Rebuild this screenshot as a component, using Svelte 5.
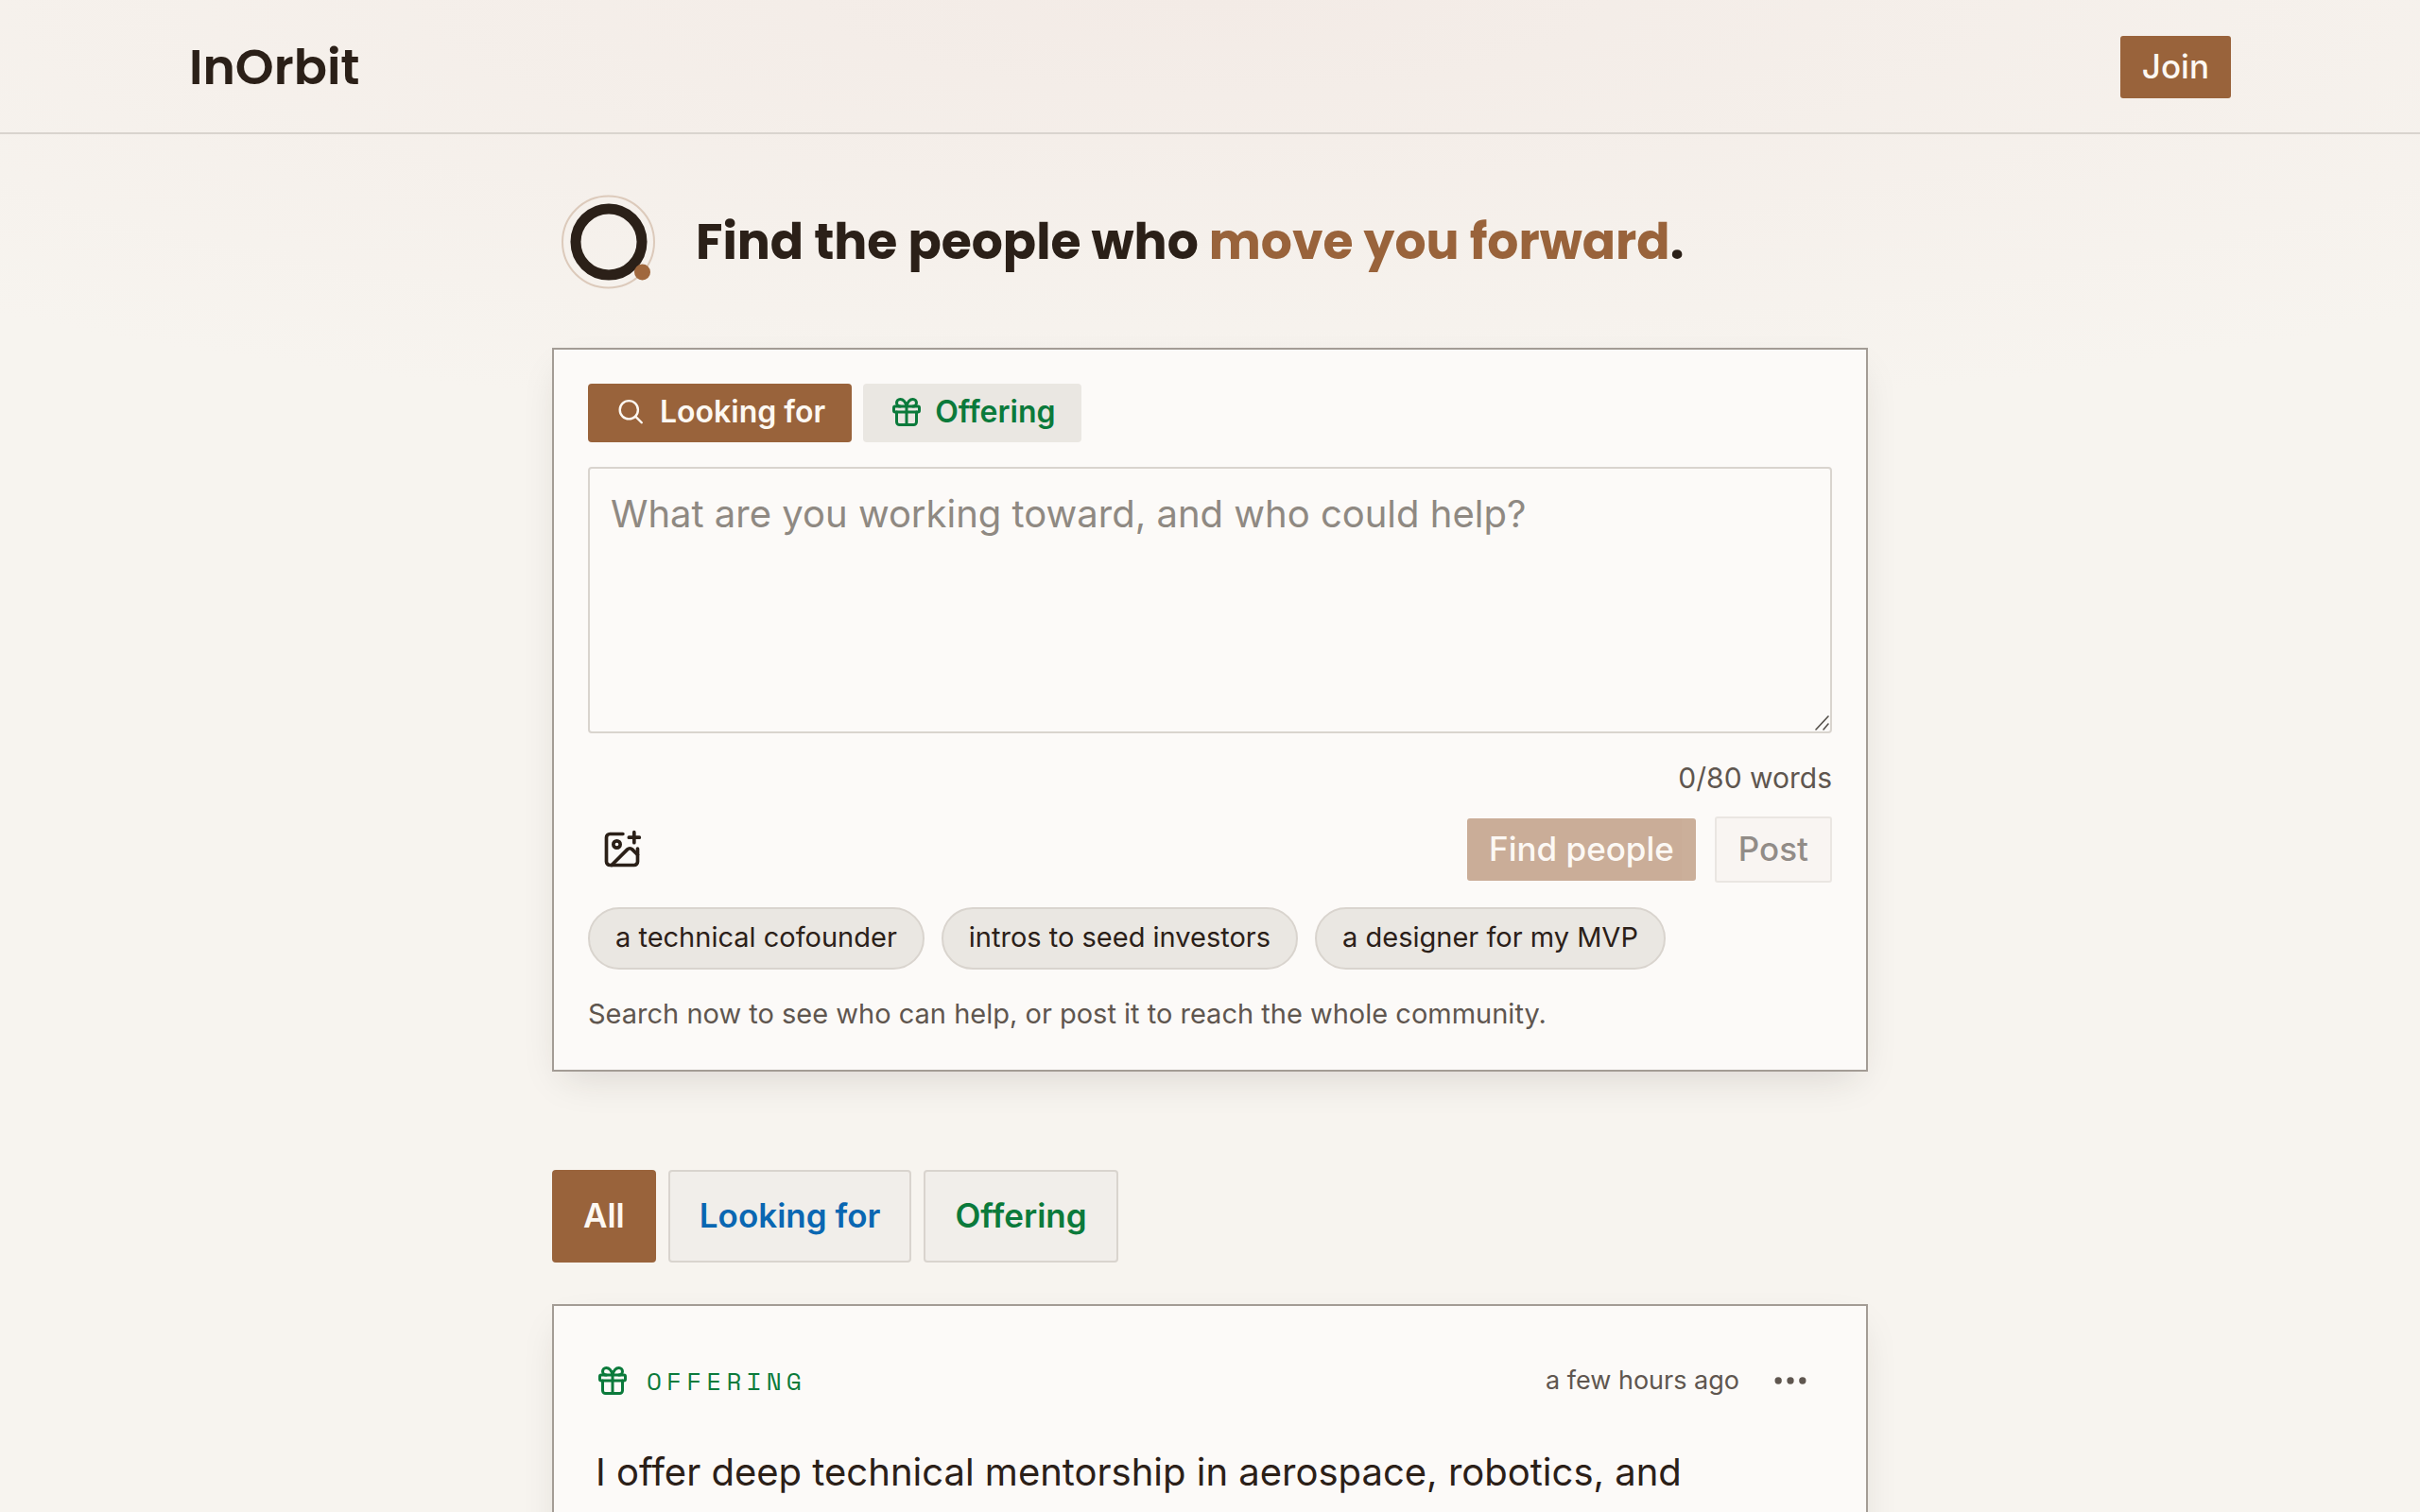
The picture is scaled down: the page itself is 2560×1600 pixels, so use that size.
<script lang="ts">
	type Kind = 'looking' | 'offering';

	let kind = $state<Kind>('looking');
	let filter = $state<'all' | Kind>('all');
	let draft = $state('');

	const maxWords = 80;
	const suggestions = ['a technical cofounder', 'intros to seed investors', 'a designer for my MVP'];

	const words = $derived(draft.trim() ? draft.trim().split(/\s+/).length : 0);
	const empty = $derived(words === 0);
</script>

{#snippet giftIcon()}
	<svg class="icon" viewBox="0 0 24 24" aria-hidden="true">
		<rect x="3" y="8" width="18" height="4" rx="1" />
		<path d="M12 8v13M19 12v7a2 2 0 0 1-2 2H7a2 2 0 0 1-2-2v-7" />
		<path d="M7.500 8a2.500 2.500 0 0 1 0-5A4.800 8 0 0 1 12 8a4.800 8 0 0 1 4.500-5 2.500 2.500 0 0 1 0 5" />
	</svg>
{/snippet}

<div class="page">
	<header class="site-header">
		<div class="header-inner">
			<a class="brand" href="/">InOrbit</a>
			<button class="btn primary" type="button">Join</button>
		</div>
	</header>

	<main>
		<div class="hero">
			<svg class="orbit" viewBox="0 0 100 100" aria-hidden="true">
				<circle class="orbit-path" cx="49.500" cy="50" r="48.500" />
				<circle class="orbit-ring" cx="50" cy="50" r="35" />
				<circle class="orbit-moon" cx="85.500" cy="82" r="8.500" />
			</svg>
			<h1>Find the people who <em>move you forward</em>.</h1>
		</div>

		<form class="card composer" onsubmit={(e) => e.preventDefault()}>
			<div class="kinds">
				<button type="button" class="kind" class:active={kind === 'looking'} onclick={() => (kind = 'looking')}>
					<svg class="icon thin" viewBox="0 0 24 24" aria-hidden="true">
						<circle cx="10.200" cy="10.500" r="6.400" />
						<path d="m19.200 19.500-4.400-4.400" />
					</svg>
					Looking for
				</button>
				<button type="button" class="kind offering" class:active={kind === 'offering'} onclick={() => (kind = 'offering')}>
					{@render giftIcon()}
					Offering
				</button>
			</div>

			<div class="draft">
				<textarea bind:value={draft} aria-label="Your post" placeholder="What are you working toward, and who could help?"></textarea>
				<svg class="grip" viewBox="0 0 18 18" aria-hidden="true">
					<path d="M3 16 16 2M11 16l5-6" />
				</svg>
			</div>
			<p class="count">{words}/{maxWords} words</p>

			<div class="actions">
				<button class="icon-btn" type="button" aria-label="Add image">
					<svg class="icon large" viewBox="0 0 24 24" aria-hidden="true">
						<path d="M16 5h6M19 2v6M21 11.500V19a2 2 0 0 1-2 2H5a2 2 0 0 1-2-2V5a2 2 0 0 1 2-2h7.500" />
						<path d="m21 15-3.086-3.086a2 2 0 0 0-2.828 0L6 21" />
						<circle cx="9" cy="9" r="2" />
					</svg>
				</button>
				<div class="submit">
					<button class="btn primary" type="submit" disabled={empty}>Find people</button>
					<button class="btn outline" type="button" disabled={empty}>Post</button>
				</div>
			</div>

			<div class="chips">
				{#each suggestions as suggestion}
					<button type="button" class="chip" onclick={() => (draft = suggestion)}>{suggestion}</button>
				{/each}
			</div>
			<p class="hint">Search now to see who can help, or post it to reach the whole community.</p>
		</form>

		<div class="filters">
			<button type="button" class="filter" class:active={filter === 'all'} onclick={() => (filter = 'all')}>All</button>
			<button type="button" class="filter looking" class:active={filter === 'looking'} onclick={() => (filter = 'looking')}>Looking for</button>
			<button type="button" class="filter offering" class:active={filter === 'offering'} onclick={() => (filter = 'offering')}>Offering</button>
		</div>

		<article class="card post">
			<div class="post-head">
				<span class="tag">{@render giftIcon()} Offering</span>
				<span class="meta">
					<time>a few hours ago</time>
					<button class="icon-btn muted" type="button" aria-label="More options">
						<svg class="icon large" viewBox="0 0 24 24" aria-hidden="true">
							<circle cx="5" cy="12" r="1" />
							<circle cx="12" cy="12" r="1" />
							<circle cx="19" cy="12" r="1" />
						</svg>
					</button>
				</span>
			</div>
			<p class="post-text">I offer deep technical mentorship in aerospace, robotics, and</p>
		</article>
	</main>
</div>

<style>
	:global(body) {
		background: #f7f4ef;
	}

	.page {
		--ink: #2b2018;
		--muted: #5f564f;
		--accent: #99633b;
		--line: #d9d4ce;
		--surface: #fcfaf8;
		--soft: #eae7e2;
		--green: #0b7a3b;
		--blue: #0a67b2;

		height: 100vh;
		overflow: hidden;
		color: var(--ink);
		background: radial-gradient(ellipse 75% 28% at 50% 0, #f3ebe6, #f7f4ef00) no-repeat;
		font-family: Inter, sans-serif;
		font-size: 30px;
		line-height: 44px;
	}

	button {
		margin: 0;
		color: inherit;
		font: inherit;
		cursor: pointer;
	}

	p {
		margin: 0;
	}

	.icon {
		flex: none;
		width: 36px;
		height: 36px;
		fill: none;
		stroke: currentColor;
		stroke-width: 2;
		stroke-linecap: round;
		stroke-linejoin: round;
	}

	.icon.thin {
		stroke-width: 1.6;
	}

	.icon.large {
		width: 44px;
		height: 44px;
	}

	.site-header {
		padding: 0 200px;
		border-bottom: 2px solid var(--line);
	}

	.header-inner {
		display: flex;
		align-items: center;
		justify-content: space-between;
		max-width: 2160px;
		padding: 38px 0 36px;
		margin: 0 auto;
	}

	.brand {
		color: var(--ink);
		font-family: Poppins, Inter, sans-serif;
		font-size: 52px;
		font-weight: 600;
		text-decoration: none;
	}

	.btn {
		padding: 10px 23px 12px;
		border: 0;
		border-radius: 3px;
		font-size: 35px;
		font-weight: 500;
	}

	.btn.primary {
		background: var(--accent);
		color: #fdf8f2;
	}

	.btn.outline {
		border: 2px solid var(--line);
		background: #f7f2ee;
	}

	.btn:disabled {
		opacity: 0.5;
	}

	main {
		max-width: 1392px;
		margin: 0 auto;
		padding-top: 64px;
	}

	.hero {
		display: flex;
		align-items: center;
		gap: 42px;
		margin-bottom: 62px;
		padding-left: 10px;
	}

	.orbit {
		flex: none;
		width: 100px;
		height: 100px;
		overflow: visible;
		fill: none;
	}

	.orbit-path {
		stroke: #dccabb;
		stroke-width: 2;
	}

	.orbit-ring {
		stroke: var(--ink);
		stroke-width: 11;
	}

	.orbit-moon {
		fill: #a0683e;
	}

	h1 {
		margin: 0;
		font-family: Poppins, Inter, sans-serif;
		font-size: 52px;
		font-weight: 700;
		line-height: 64px;
	}

	h1 em {
		color: var(--accent);
		font-style: normal;
	}

	.card {
		border: 2px solid #a39c95;
		background: var(--surface);
		box-shadow: 0 16px 40px -12px #2b201826;
	}

	.composer {
		padding: 36px;
	}

	.kinds {
		display: flex;
		gap: 12px;
		margin-bottom: 26px;
	}

	.kind {
		display: flex;
		align-items: center;
		gap: 12px;
		padding: 8px 28px 10px;
		border: 0;
		border-radius: 4px;
		background: var(--soft);
		font-size: 32px;
		font-weight: 600;
	}

	.kind.offering {
		color: var(--green);
	}

	.kind.active {
		background: var(--accent);
		color: #fdf8f2;
	}

	.draft {
		position: relative;
	}

	textarea {
		display: block;
		box-sizing: border-box;
		width: 100%;
		height: 282px;
		padding: 20px 22px;
		border: 2px solid var(--line);
		border-radius: 4px;
		background: transparent;
		color: inherit;
		font: 40px/56px Inter, sans-serif;
		resize: vertical;
	}

	textarea::placeholder {
		color: #8f8982;
	}

	textarea::-webkit-resizer {
		background: transparent;
	}

	.grip {
		position: absolute;
		right: 2px;
		bottom: 2px;
		width: 18px;
		height: 18px;
		fill: none;
		stroke: #55504b;
		stroke-width: 1.6;
		stroke-linecap: round;
		pointer-events: none;
	}

	.count {
		margin: 25px 0 19px;
		color: var(--muted);
		text-align: right;
	}

	.actions,
	.submit {
		display: flex;
		align-items: center;
		gap: 20px;
	}

	.actions {
		justify-content: space-between;
		margin-bottom: 26px;
	}

	.icon-btn {
		display: flex;
		justify-content: center;
		width: 72px;
		padding: 0;
		border: 0;
		background: none;
	}

	.icon-btn.muted {
		color: var(--muted);
	}

	.chips {
		display: flex;
		flex-wrap: wrap;
		gap: 18px;
		margin-bottom: 25px;
	}

	.chip {
		padding: 8px 27px 10px;
		border: 2px solid var(--line);
		border-radius: 34px;
		background: var(--soft);
		font-size: 29px;
	}

	.hint {
		padding-bottom: 1px;
		color: var(--muted);
		font-size: 29px;
	}

	.filters {
		display: flex;
		gap: 13px;
		margin: 104px 0 44px;
	}

	.filter {
		padding: 24px 31px 26px;
		border: 2px solid var(--line);
		border-radius: 4px;
		background: #f1eeea;
		font-size: 35px;
		font-weight: 600;
	}

	.filter.looking {
		color: var(--blue);
	}

	.filter.offering {
		color: var(--green);
	}

	.filter.active {
		border-color: var(--accent);
		background: var(--accent);
		color: #fdf8f2;
	}

	.post {
		padding: 57px 44px;
	}

	.post-head,
	.tag,
	.meta {
		display: flex;
		align-items: center;
	}

	.post-head {
		justify-content: space-between;
		margin-bottom: 45px;
	}

	.tag {
		gap: 18px;
		color: var(--green);
		font-family: "Space Mono", "Liberation Mono", monospace;
		font-size: 26px;
		letter-spacing: 0.2em;
		text-transform: uppercase;
	}

	.meta {
		gap: 18px;
		color: var(--muted);
		font-size: 27px;
	}

	.post-text {
		font-size: 40px;
		line-height: 60px;
	}
</style>
